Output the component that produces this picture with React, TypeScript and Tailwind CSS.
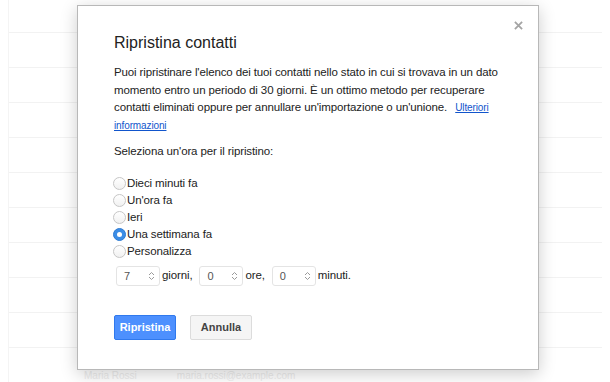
import React from "react";

const options = ["Dieci minuti fa", "Un'ora fa", "Ieri", "Una settimana fa", "Personalizza"];

function Radio({ checked }: { checked: boolean }) {
  if (checked) {
    return (
      <span className="w-[13px] h-[13px] rounded-full bg-[#3b8de6] border border-[#2f7bd2] flex items-center justify-center shrink-0">
        <span className="w-[5px] h-[5px] rounded-full bg-white" />
      </span>
    );
  }
  return (
    <span className="w-[13px] h-[13px] rounded-full bg-gradient-to-b from-[#ffffff] to-[#f1f1f1] border border-[#c6c6c6] shrink-0" />
  );
}

function Spinner() {
  return (
    <svg width="7" height="10" viewBox="0 0 7 10" fill="none" stroke="#9a9a9a" strokeWidth="1">
      <path d="M1 4 L3.5 1.5 L6 4" />
      <path d="M1 6 L3.5 8.5 L6 6" />
    </svg>
  );
}

function NumberBox({ value }: { value: string }) {
  return (
    <div className="w-[44px] h-[20px] border border-[#e4e4e4] rounded-[3px] bg-white flex items-center justify-between pl-[7px] pr-[4px] text-[11px] text-[#555]">
      <span>{value}</span>
      <Spinner />
    </div>
  );
}

export default function App() {
  const rows = Array.from({ length: 11 });
  return (
    <div className="relative w-[610px] h-[382px] bg-white overflow-hidden" style={{ fontFamily: '"Liberation Sans", Arial, sans-serif' }}>
      {/* Background list */}
      <div className="ml-[8px] mr-[8px] border-l border-[#f4f4f4] h-full">
        <div className="h-[33px] border-b border-[#f2f2f2]" />
        {rows.map((_, i) => (
          <div key={i} className="h-[35px] border-b border-[#f2f2f2]" />
        ))}
      </div>
      <div className="absolute left-[84px] top-[371px] flex gap-[40px] text-[10px] text-[#ececec] leading-[10px]">
        <span>Maria Rossi</span>
        <span>maria.rossi@example.com</span>
      </div>

      {/* Dialog */}
      <div className="absolute left-[77px] top-[5px] w-[462px] h-[365px] bg-white border border-[#b8b8b8] shadow-[0_4px_16px_rgba(0,0,0,0.2)] pl-[36px] pr-[34px] pt-[27px] text-[#222]">
        <button className="absolute right-[13px] top-[12px] w-[14px] h-[14px] flex items-center justify-center">
          <svg width="9" height="9" viewBox="0 0 10 10" stroke="#a4a4a4" strokeWidth="2">
            <path d="M1 1 L9 9 M9 1 L1 9" />
          </svg>
        </button>

        <h2 className="text-[16px] leading-[20px] font-normal text-[#222]">Ripristina contatti</h2>

        <p className="mt-[11px] text-[11.5px] leading-[17.5px] tracking-[-0.12px]">
          <span>Puoi ripristinare l'elenco dei tuoi contatti nello stato in cui si trovava in un dato</span>{" "}
          <span>momento entro un periodo di 30 giorni. È un ottimo metodo per recuperare</span>{" "}
          <span>contatti eliminati oppure per annullare un'importazione o un'unione.</span>{" "}
          <a className="ml-[5px] text-[10px] text-[#15c] underline">Ulteriori</a>{" "}
          <a className="text-[10px] text-[#15c] underline">informazioni</a>
        </p>

        <p className="mt-[8px] text-[11.5px] leading-[18px] tracking-[-0.12px]">Seleziona un'ora per il ripristino:</p>

        <div className="mt-[15px] flex flex-col">
          {options.map((o, i) => (
            <label key={o} className="h-[17px] flex items-center gap-[1px] text-[11.5px] tracking-[-0.12px] -ml-[1px]">
              <Radio checked={i === 3} />
              <span>{o}</span>
            </label>
          ))}
        </div>

        <div className="mt-[6px] ml-[2px] flex items-center gap-[2px] text-[11.5px] tracking-[-0.12px]">
          <NumberBox value="7" />
          <span className="mr-[5px]">giorni,</span>
          <NumberBox value="0" />
          <span className="mr-[5px]">ore,</span>
          <NumberBox value="0" />
          <span>minuti.</span>
        </div>

        <div className="mt-[29px] flex gap-[14px]">
          <button className="w-[62px] h-[25px] rounded-[2px] bg-[#4d90fe] border border-[#3079ed] text-white text-[11px] font-bold">
            Ripristina
          </button>
          <button className="w-[62px] h-[25px] rounded-[2px] bg-[#f5f5f5] border border-[#dcdcdc] text-[#444] text-[11px] font-bold">
            Annulla
          </button>
        </div>
      </div>
    </div>
  );
}
